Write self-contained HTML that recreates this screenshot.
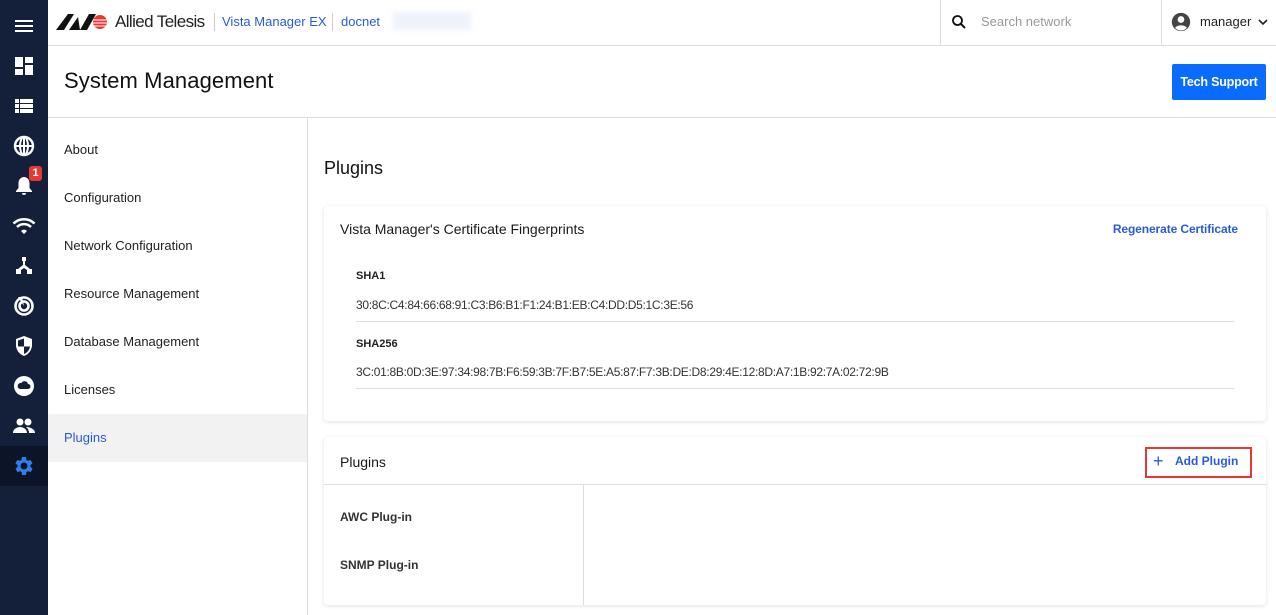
<!DOCTYPE html>
<html><head><meta charset="utf-8"><style>
*{box-sizing:border-box;margin:0;padding:0}
body{width:1276px;height:615px;overflow:hidden;font-family:"Liberation Sans",Arial,sans-serif;background:#fff;position:relative;color:#1a1a1a}
.side{position:absolute;left:0;top:0;width:48px;height:615px;background:#14203a}
.side svg{position:absolute;left:12px;width:24px;height:24px;fill:#fff}
.hdr{position:absolute;left:48px;top:0;right:0;height:46px;border-bottom:1px solid #ddd}
.a{position:absolute;white-space:nowrap}
.nav div{position:absolute;left:48px;width:259px;height:48px;line-height:48px;padding-left:16px;font-size:13px;color:#222}
.card{position:absolute;left:324px;width:942px;background:#fff;border-radius:4px;box-shadow:0 1px 4px rgba(0,0,0,.12)}
</style></head><body>
<div class="side">
<svg style="top:14px" viewBox="0 0 24 24"><path d="M3 6h18v2H3zM3 11h18v2H3zM3 16h18v2H3z"/></svg>
<svg style="top:54px" viewBox="0 0 24 24"><path d="M3 3h8v10H3zM13 3h8v6h-8zM13 11h8v10h-8zM3 15h8v6H3z"/></svg>
<svg style="top:94px" viewBox="0 0 24 24"><path d="M3 5h4v4H3zM8 5h13v4H8zM3 10h4v4H3zM8 10h13v4H8zM3 15h4v4H3zM8 15h13v4H8z"/></svg>
<svg style="top:134px" viewBox="0 0 24 24"><circle cx="12" cy="12" r="9" fill="none" stroke="#fff" stroke-width="2.4"/><path d="M3 11h18v2H3zM11 3h2v18h-2z"/><ellipse cx="12" cy="12" rx="4" ry="9" fill="none" stroke="#fff" stroke-width="2"/></svg>
<svg style="top:174px" viewBox="0 0 24 24"><path d="M12 3c-3 0-5.5 2.5-5.5 6v5L4 17v1h16v-1l-2.5-3V9c0-3.5-2.5-6-5.5-6zM10 19h4a2 2 0 0 1-4 0z"/></svg>
<div class="a" style="left:29px;top:166px;width:13px;height:15px;background:#e53935;border-radius:3px;color:#fff;font-size:11px;font-weight:bold;text-align:center;line-height:15px">1</div>
<svg style="top:214px" viewBox="0 0 24 24"><path d="M12 20l3-3a4 4 0 0 0-6 0z"/><path d="M5 13a10 10 0 0 1 14 0" fill="none" stroke="#fff" stroke-width="2.5"/><path d="M1.5 9.5a15 15 0 0 1 21 0" fill="none" stroke="#fff" stroke-width="2.5"/></svg>
<svg style="top:254px" viewBox="0 0 24 24"><path d="M10 3h4v4h-1v4l5 4h2v5h-5v-4l-3-2-3 2v4H4v-5h2l5-4V7h-1z"/></svg>
<svg style="top:294px" viewBox="0 0 24 24"><circle cx="12" cy="12" r="8.5" fill="none" stroke="#fff" stroke-width="2.6"/><circle cx="12" cy="12" r="4.5" fill="none" stroke="#fff" stroke-width="2.6"/><path d="M12 12L6 3h4z"/></svg>
<svg style="top:334px" viewBox="0 0 24 24"><path d="M12 2l8 3v6c0 5-3.5 9.5-8 11-4.5-1.5-8-6-8-11V5z"/><path d="M12 4.5v8h6c-.5 3.5-3 6.5-6 7.5v-7.5H6V6.5z" fill="#14203a"/></svg>
<svg style="top:374px" viewBox="0 0 24 24"><circle cx="12" cy="12" r="10"/><path d="M8 15h8a2.5 2.5 0 0 0 0-5 3.5 3.5 0 0 0-6.5-1A3 3 0 0 0 8 15z" fill="#14203a"/></svg>
<svg style="top:414px" viewBox="0 0 24 24"><circle cx="8" cy="8" r="3.5"/><circle cx="16" cy="8" r="3.5"/><path d="M1 19c0-4 4-6 7-6s7 2 7 6zM14 13c3 0 9 1.5 9 6h-6c0-2.5-1-4.5-3-6z"/></svg>
<div class="a" style="left:0;top:446px;width:48px;height:40px;background:#0c1528"></div>
<svg style="top:454px;fill:#2f80ed" viewBox="0 0 24 24"><path d="M19.4 13a7.5 7.5 0 0 0 0-2l2.1-1.6-2-3.5-2.5 1a7 7 0 0 0-1.7-1L15 3h-4l-.4 2.9a7 7 0 0 0-1.7 1l-2.5-1-2 3.5L6.6 11a7.5 7.5 0 0 0 0 2l-2.1 1.6 2 3.5 2.5-1a7 7 0 0 0 1.7 1L11 21h4l.4-2.9a7 7 0 0 0 1.7-1l2.5 1 2-3.5zM13 15.5a3.5 3.5 0 1 1 0-7 3.5 3.5 0 0 1 0 7z" transform="translate(-1 0)"/></svg>
</div>
<div class="hdr">
<svg class="a" style="left:8px;top:14px" width="56" height="16" viewBox="0 0 56 16"><path d="M0 16L12 0h6L8 16z" fill="#111"/><path d="M13 16L22 3l2 13zM24 16L33 0h7l-9 16z" fill="#111"/><circle cx="44" cy="8" r="7" fill="#e53935"/><path d="M37 6h14M37 9h14M38 12h12" stroke="#fff" stroke-width="1"/></svg>
<div class="a" style="left:67px;top:12px;font-size:17px;color:#222;letter-spacing:-0.6px">Allied Telesis</div>
<div class="a" style="left:166px;top:13px;width:1px;height:18px;background:#ccc"></div>
<div class="a" style="left:174px;top:14px;font-size:13px;color:#2a5bd7">Vista Manager EX</div>
<div class="a" style="left:284px;top:13px;width:1px;height:18px;background:#ccc"></div>
<div class="a" style="left:293px;top:14px;font-size:13px;color:#2a5bd7">docnet</div>
<div class="a" style="left:345px;top:12px;width:78px;height:18px;background:#eef2fb;filter:blur(3px)"></div>
<div class="a" style="left:892px;top:0;width:1px;height:45px;background:#ddd"></div>
<svg class="a" style="left:902px;top:13px" width="18" height="18" viewBox="0 0 24 24"><circle cx="10" cy="10" r="6" fill="none" stroke="#111" stroke-width="2.4"/><path d="M14 14l6 6" stroke="#111" stroke-width="2.6"/></svg>
<div class="a" style="left:933px;top:14px;font-size:13px;color:#999">Search network</div>
<div class="a" style="left:1113px;top:0;width:1px;height:45px;background:#ddd"></div>
<svg class="a" style="left:1123px;top:12px" width="20" height="20" viewBox="0 0 24 24"><circle cx="12" cy="12" r="11" fill="#444"/><circle cx="12" cy="9" r="4" fill="#fff"/><path d="M5 19c2-4 12-4 14 0a9 9 0 0 1-14 0z" fill="#fff"/></svg>
<div class="a" style="left:1152px;top:14px;font-size:13px;color:#222">manager</div>
<svg class="a" style="left:1210px;top:18px" width="10" height="8" viewBox="0 0 10 8"><path d="M1 2l4 4 4-4" fill="none" stroke="#222" stroke-width="1.6"/></svg>
</div>
<div class="a" style="left:64px;top:68px;font-size:22px;color:#111;letter-spacing:0.1px">System Management</div>
<div class="a" style="left:1172px;top:64px;width:94px;height:36px;background:#0a6cff;border-radius:2px;color:#fff;font-size:12.5px;font-weight:bold;text-align:center;line-height:36px;letter-spacing:-0.2px">Tech Support</div>
<div class="a" style="left:48px;top:117px;right:0;height:1px;background:#ddd"></div>
<div class="a" style="left:307px;top:117px;width:1px;height:498px;background:#ddd"></div>
<div class="nav">
<div style="top:126px">About</div><div style="top:174px">Configuration</div><div style="top:222px">Network Configuration</div><div style="top:270px">Resource Management</div><div style="top:318px">Database Management</div><div style="top:366px">Licenses</div><div style="top:414px;background:#f2f2f2;color:#2a5bd7">Plugins</div>
</div>
<div class="a" style="left:324px;top:158px;font-size:18px;color:#111">Plugins</div>
<div class="card" style="top:206px;height:215px">
<div class="a" style="left:16px;top:15px;font-size:14px">Vista Manager's Certificate Fingerprints</div>
<div class="a" style="right:28px;top:16px;font-size:12px;color:#2a5bd7;font-weight:bold;letter-spacing:-0.1px">Regenerate Certificate</div>
<div class="a" style="left:32px;top:64px;font-size:11px;font-weight:bold;color:#222">SHA1</div>
<div class="a" style="left:32px;top:92px;font-size:12px;color:#333;letter-spacing:-0.3px">30:8C:C4:84:66:68:91:C3:B6:B1:F1:24:B1:EB:C4:DD:D5:1C:3E:56</div>
<div class="a" style="left:32px;top:115px;width:878px;height:1px;background:#ddd"></div>
<div class="a" style="left:32px;top:132px;font-size:11px;font-weight:bold;color:#222">SHA256</div>
<div class="a" style="left:32px;top:159px;font-size:12px;color:#333;letter-spacing:-0.3px">3C:01:8B:0D:3E:97:34:98:7B:F6:59:3B:7F:B7:5E:A5:87:F7:3B:DE:D8:29:4E:12:8D:A7:1B:92:7A:02:72:9B</div>
<div class="a" style="left:32px;top:182px;width:878px;height:1px;background:#ddd"></div>
</div>
<div class="card" style="top:437px;height:168px">
<div class="a" style="left:16px;top:17px;font-size:14px">Plugins</div>
<div class="a" style="left:821px;top:10px;width:107px;height:31px;border:2px solid #e53935"></div>
<div class="a" style="left:829px;top:14px;font-size:18px;color:#2a5bd7">+</div>
<div class="a" style="left:851px;top:17px;font-size:12px;color:#2a5bd7;font-weight:bold">Add Plugin</div>
<div class="a" style="left:0;top:47px;width:942px;height:1px;background:#ddd"></div>
<div class="a" style="left:259px;top:48px;width:1px;height:120px;background:#ddd"></div>
<div class="a" style="left:16px;top:73px;font-size:12px;font-weight:bold;color:#333">AWC Plug-in</div>
<div class="a" style="left:16px;top:121px;font-size:12px;font-weight:bold;color:#333">SNMP Plug-in</div>
</div>
</body></html>
